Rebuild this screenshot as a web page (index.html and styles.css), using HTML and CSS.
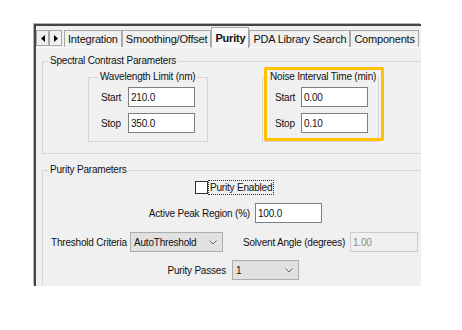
FILE: index.html
```html
<!DOCTYPE html>
<html lang="en">
<head>
    <meta charset="UTF-8">
    <title>Purity</title>
    <link rel="stylesheet" href="styles.css">
</head>
<body>
    <div class="window">
        <div class="tab-strip">
            <div class="scroller">
                <span class="scroll-btn"><svg width="4" height="7" viewBox="0 0 4 7"><path d="M4 0 L0 3.5 L4 7 Z" fill="#000"/></svg></span>
                <span class="scroll-btn"><svg width="4" height="7" viewBox="0 0 4 7"><path d="M0 0 L4 3.5 L0 7 Z" fill="#000"/></svg></span>
            </div>
            <div class="tab">Integration</div>
            <div class="tab">Smoothing/Offset</div>
            <div class="tab active">Purity</div>
            <div class="tab">PDA Library Search</div>
            <div class="tab">Components</div>
        </div>

        <div class="page">
            <fieldset class="group spectral">
                <legend>Spectral Contrast Parameters</legend>
                <div class="range-row">
                    <fieldset class="group range wavelength">
                        <legend>Wavelength Limit (nm)</legend>
                        <div class="field"><label>Start</label><input type="text" value="210.0"></div>
                        <div class="field"><label>Stop</label><input type="text" value="350.0"></div>
                    </fieldset>
                    <div class="noise-wrap">
                        <fieldset class="group range noise">
                            <legend>Noise Interval Time (min)</legend>
                            <div class="field"><label>Start</label><input type="text" value="0.00"></div>
                            <div class="field"><label>Stop</label><input type="text" value="0.10"></div>
                        </fieldset>
                        <div class="highlight"></div>
                    </div>
                </div>
            </fieldset>

            <fieldset class="group purity">
                <legend>Purity Parameters</legend>
                <div class="prow enabled-row">
                    <span class="check"></span>
                    <span class="check-label">Purity Enabled</span>
                </div>
                <div class="prow peak-row">
                    <label class="peak-label">Active Peak Region (%)</label>
                    <input type="text" class="peak-input" value="100.0">
                </div>
                <div class="prow threshold-row">
                    <label class="threshold-label">Threshold Criteria</label>
                    <div class="combo threshold-combo">
                        <span>AutoThreshold</span>
                        <svg width="8" height="5" viewBox="0 0 8 5"><path d="M0.5 0.5 L4 4 L7.5 0.5" fill="none" stroke="#6a6a6a" stroke-width="1"/></svg>
                    </div>
                    <label class="solvent-label">Solvent Angle (degrees)</label>
                    <input type="text" class="solvent-input" value="1.00" disabled>
                </div>
                <div class="prow passes-row">
                    <label class="passes-label">Purity Passes</label>
                    <div class="combo passes-combo">
                        <span>1</span>
                        <svg width="8" height="5" viewBox="0 0 8 5"><path d="M0.5 0.5 L4 4 L7.5 0.5" fill="none" stroke="#6a6a6a" stroke-width="1"/></svg>
                    </div>
                </div>
            </fieldset>
        </div>
    </div>
</body>
</html>
```

FILE: styles.css
```css
* {
    margin: 0;
    padding: 0;
    box-sizing: border-box;
}

body {
    background-color: #fff;
    font-family: "Liberation Sans", Arial, sans-serif;
    font-size: 10px;
    letter-spacing: -0.2px;
    color: #111;
}

label,
legend,
.check-label {
    white-space: nowrap;
}

.window {
    margin: 24px 0 0 34px;
    width: 387px;
    height: 262px;
    border-top: 2px solid #454545;
    border-left: 2px solid #454545;
    box-shadow: -1px -1px 0 #b4b4b4;
    background-color: #f0f0f0;
    overflow: hidden;
}

/* tab strip */
.tab-strip {
    display: flex;
    align-items: flex-end;
    height: 22px;
    border-bottom: 1px solid #fcfcfc;
}

.scroller {
    display: flex;
    margin-bottom: 1px;
    margin-right: 2px;
}

.scroll-btn {
    width: 13px;
    height: 16px;
    border: 1px solid #a8a8a8;
    background-color: #f0f0f0;
    display: flex;
    align-items: center;
    justify-content: center;
}

.tab {
    height: 17px;
    padding: 0 3px;
    border: 1px solid #a9a9a9;
    border-bottom: none;
    display: flex;
    align-items: center;
    font-size: 11px;
    white-space: nowrap;
}

.tab.active {
    height: 21px;
    margin-bottom: -1px;
    font-weight: bold;
    background-color: #f7f7f7;
    position: relative;
}

/* tab page */
.page {
    padding: 7px 0 0 6px;
}

.group {
    border: 1px solid #d6d6d6;
    min-width: 0;
}

.group legend {
    padding: 0 2px;
    line-height: 12px;
}

.spectral {
    width: 400px;
    padding: 4px 0 11px 0;
}

.spectral > legend,
.purity > legend {
    margin-left: 5px;
}

.range-row {
    display: flex;
    align-items: flex-start;
    padding-left: 45px;
}

.range {
    padding: 4px 0 8px 0;
}

.wavelength {
    width: 120px;
}

.wavelength legend {
    margin-left: 9px;
}

.noise-wrap {
    position: relative;
    margin-left: 54px;
}

.noise {
    width: 117px;
}

.noise legend {
    margin-left: 5px;
}

.highlight {
    position: absolute;
    left: 2px;
    top: -4px;
    width: 120px;
    height: 74px;
    border: 3px solid #ffc000;
    border-radius: 2px;
}

.field {
    display: flex;
    align-items: center;
    padding-left: 12px;
}

.field + .field {
    margin-top: 6px;
}

.field label {
    width: 27px;
}

.noise .field label {
    width: 26px;
}

input[type="text"] {
    width: 67px;
    height: 20px;
    border: 1px solid #7f7f7f;
    background-color: #fff;
    padding: 0 2px;
    font-family: inherit;
    font-size: 10px;
    letter-spacing: -0.2px;
    color: #111;
    outline: none;
}

/* purity parameters */
.purity {
    width: 400px;
    margin-top: 10px;
    padding: 1px 0 20px 0;
}

.prow {
    display: flex;
    align-items: center;
    height: 20px;
}

.enabled-row {
    padding-left: 152px;
}

.check {
    width: 13px;
    height: 13px;
    border: 1px solid #333;
    background-color: #fff;
}

.check-label {
    border: 1px dotted #333;
    padding: 0 1px;
    line-height: 13px;
}

.peak-row {
    margin-top: 6px;
}

.peak-label {
    width: 207px;
    text-align: right;
    margin-right: 5px;
}

.threshold-row {
    margin-top: 9px;
    padding-left: 8px;
}

.threshold-label {
    width: 79px;
}

.combo {
    height: 20px;
    border: 1px solid #adadad;
    background-color: #e1e1e1;
    display: flex;
    align-items: center;
    justify-content: space-between;
    padding: 0 5px 0 3px;
}

.threshold-combo {
    width: 93px;
}

.solvent-label {
    width: 100px;
    margin-left: 20px;
    margin-right: 7px;
    text-align: right;
}

input.solvent-input {
    width: 68px;
    border-color: #cccccc;
    background-color: #f0f0f0;
    color: #8a8a8a;
}

.passes-row {
    margin-top: 8px;
}

.passes-label {
    width: 183px;
    text-align: right;
    margin-right: 6px;
}

.passes-combo {
    width: 67px;
}
```
